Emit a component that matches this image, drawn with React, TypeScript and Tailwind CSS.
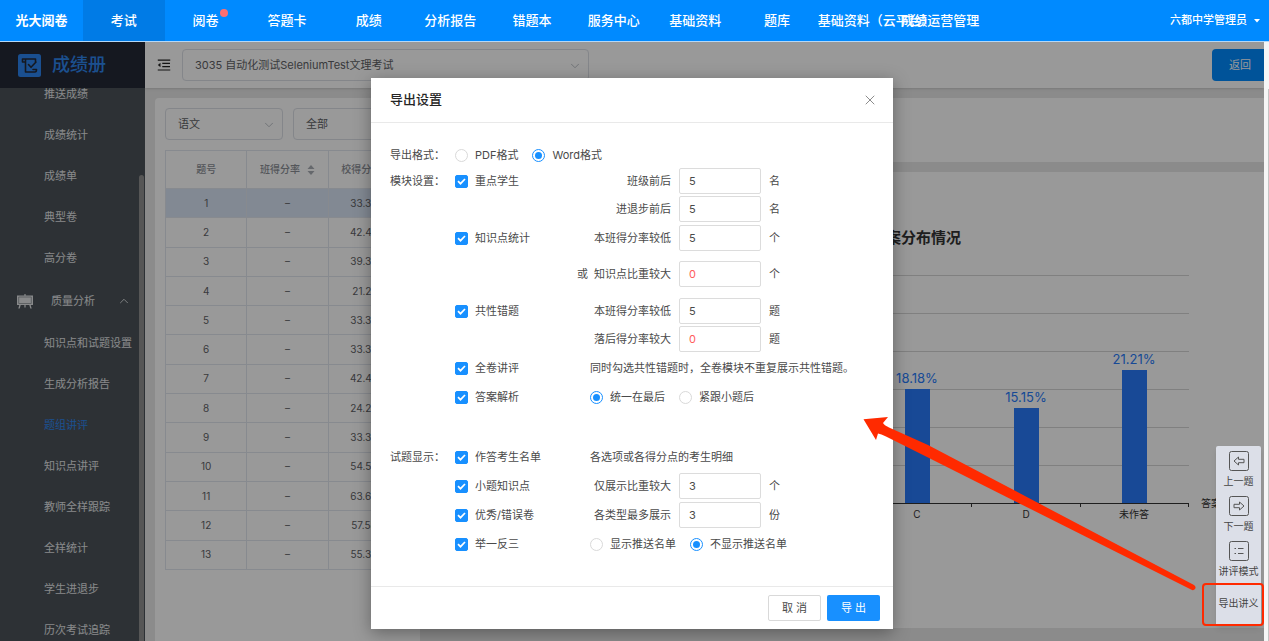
import { useState } from "react";
import type { ReactNode } from "react";
import { ChevronDown, ChevronUp, X } from "lucide-react";
import { AiOutlineMenuFold } from "react-icons/ai";

const navItems = [
  { label: "考试", active: true },
  { label: "阅卷", dot: true },
  { label: "答题卡" },
  { label: "成绩" },
  { label: "分析报告" },
  { label: "错题本" },
  { label: "服务中心" },
  { label: "基础资料" },
  { label: "题库" },
  { label: "基础资料（云平台）" },
  { label: "成绩运营管理" },
];

const scoreMenu = ["推送成绩", "成绩统计", "成绩单", "典型卷", "高分卷"];

const qualityMenu = [
  "知识点和试题设置",
  "生成分析报告",
  "题组讲评",
  "知识点讲评",
  "教师全样跟踪",
  "全样统计",
  "学生进退步",
  "历次考试追踪",
];

const rates = [
  "33.33%",
  "42.42%",
  "39.39%",
  "21.21%",
  "33.33%",
  "33.33%",
  "42.42%",
  "24.24%",
  "33.33%",
  "54.55%",
  "63.64%",
  "57.58%",
  "55.30%",
];

const bars = [
  { label: "A", x: 270, value: 39.39 },
  { label: "B", x: 379, value: 6.06 },
  { label: "C", x: 487, value: 18.18 },
  { label: "D", x: 596, value: 15.15 },
  { label: "未作答", x: 704, value: 21.21 },
];

const Header = () => (
  <header className="flex h-[42px] shrink-0 items-stretch border-b border-[#b5d8f7] bg-[#008aff] text-[13px] font-medium text-white">
    <a href="#" className="flex w-[83px] shrink-0 items-center justify-center font-bold">
      光大阅卷
    </a>
    <nav className="grid w-[898px] shrink-0 grid-cols-11">
      {navItems.map((item) => (
        <a
          key={item.label}
          href="#"
          className={`relative whitespace-nowrap text-center leading-[41px] ${
            item.active ? "bg-[#007be6]" : ""
          }`}
        >
          {item.label}
          {item.dot && (
            <span className="absolute right-[18px] top-[9px] size-2 rounded-full bg-[#ff6f6f]" />
          )}
        </a>
      ))}
    </nav>
    <button className="ml-auto mr-[9px] flex items-center gap-[7px] whitespace-nowrap text-[11px]">
      六都中学管理员
      <svg width="6" height="4" viewBox="0 0 6 4" fill="currentColor">
        <path d="M0 0h6L3 3.5z" />
      </svg>
    </button>
  </header>
);

const Sidebar = () => (
  <aside className="flex w-[145px] shrink-0 flex-col bg-[#4b5359] text-[11px] text-[#e3e5e7]">
    <div className="flex h-[46px] shrink-0 items-center gap-[11px] bg-[#242936] pl-[18px] text-lg font-medium text-[#2e86ee]">
      <svg width="23" height="23" viewBox="0 0 23 23" fill="none">
        <rect width="23" height="23" rx="2.5" fill="#2c84f0" />
        <path
          d="M7.500 8H4.500V5h13v3.500M7.500 5v13h9.500q1.500 0 1.500-2.500h-3.500M10.500 10.500l2.500 2.800 5-5.300"
          stroke="#242936"
          strokeWidth="1.600"
          strokeLinecap="round"
          strokeLinejoin="round"
        />
      </svg>
      成绩册
    </div>
    <div className="flex min-h-0 flex-1">
      <div className="min-w-0 flex-1 overflow-hidden">
        <ul className="-mt-[14px]">
          {scoreMenu.map((label) => (
            <li key={label}>
              <a href="#" className="flex h-[41px] items-center whitespace-nowrap pl-11">
                {label}
              </a>
            </li>
          ))}
        </ul>
        <button className="flex h-11 w-full items-center pl-[17px] pr-2">
          <svg width="16" height="15" viewBox="0 0 16 15" fill="currentColor">
            <path d="M7.400 0h1.200v1.500H16v9.500h-2.300l1 3.500h-1.400l-1-3.500H8.600v2.500H7.400V11H3.700l-1 3.500H1.300l1-3.500H0V1.500h7.400z" />
            <path d="M1.700 3h12.600v6.500H1.700z" fill="none" stroke="#8b9196" strokeWidth=".8" />
          </svg>
          <span className="ml-[18px]">质量分析</span>
          <ChevronUp className="ml-auto size-[14px]" strokeWidth={1.5} />
        </button>
        <ul>
          {qualityMenu.map((label) => (
            <li key={label}>
              <a
                href="#"
                className={`flex h-[41px] items-center whitespace-nowrap pl-11 ${
                  label === "题组讲评" ? "text-[#2e86ee]" : ""
                }`}
              >
                {label}
              </a>
            </li>
          ))}
        </ul>
      </div>
      <div className="mr-px mt-[87px] w-[5px] shrink-0 rounded-t bg-[#8f8f8f]" />
    </div>
  </aside>
);

const SelectBox = ({ label, options, className }: { label: string; options: string[]; className: string }) => (
  <div className={`relative ${className}`}>
    <select
      aria-label={label}
      className="h-8 w-full appearance-none rounded border border-[#dcdfe6] bg-white pl-3 pr-7 text-[11px] text-[#606266]"
    >
      {options.map((option) => (
        <option key={option}>{option}</option>
      ))}
    </select>
    <ChevronDown
      className="pointer-events-none absolute right-[7px] top-[10px] size-[14px] text-[#b4b8bf]"
      strokeWidth={1.5}
    />
  </div>
);

const Sorter = () => (
  <svg width="8" height="10" viewBox="0 0 8 10" fill="#a9adb5">
    <path d="M4 0l3.500 4h-7zM4 10L.5 6h7z" />
  </svg>
);

const ScoreTable = () => (
  <table className="mt-[10px] h-[420px] w-full table-fixed border-collapse text-center text-[10px] text-[#606266]">
    <thead className="text-[#8c9097]">
      <tr className="h-[38px]">
        <th className="border border-[#e2e6ee] font-medium">题号</th>
        <th className="border border-[#e2e6ee] font-medium">
          <span className="flex items-center justify-center gap-[7px] whitespace-nowrap">
            班得分率 <Sorter />
          </span>
        </th>
        <th className="border border-[#e2e6ee] font-medium">
          <span className="flex items-center justify-center gap-[7px] whitespace-nowrap">
            校得分率 <Sorter />
          </span>
        </th>
      </tr>
    </thead>
    <tbody>
      {rates.map((rate, i) => (
        <tr key={i} className={i === 0 ? "bg-[#d9e4f5]" : ""}>
          <td className="border border-[#e2e6ee]">{i + 1}</td>
          <td className="border border-[#e2e6ee]">–</td>
          <td className="border border-[#e2e6ee]">{rate}</td>
        </tr>
      ))}
    </tbody>
  </table>
);

const AnswerChart = () => (
  <svg
    className="h-full w-full"
    viewBox="0 0 834 456"
    preserveAspectRatio="xMaxYMin meet"
    fill="#333"
    fontSize="10"
  >
    <text x="531" y="71" fontSize="15" fontWeight="700" textAnchor="end">
      学生答案分布情况
    </text>
    {[103, 141, 179, 217, 255, 293].map((y) => (
      <path key={y} d={`M216 ${y}.500H759`} stroke="#d5d5d5" />
    ))}
    {bars.map((bar) => {
      const height = Math.round(bar.value * 6.27);
      return (
        <g key={bar.label} textAnchor="middle">
          <rect x={bar.x - 12} y={331 - height} width="25" height={height} fill="#287bfa" />
          <text x={bar.x} y={325 - height} fontSize="13" fill="#287bfa">
            {bar.value}%
          </text>
          <text x={bar.x} y="346">
            {bar.label}
          </text>
        </g>
      );
    })}
    <path d="M216 331.500H759M216.500 331v4M324.500 331v4M433.500 331v4M541.500 331v4M650.500 331v4M758.500 331v4" stroke="#333" />
    <text x="771" y="335">
      答案
    </text>
  </svg>
);

const Check = ({ children }: { children: ReactNode }) => (
  <label className="flex items-center gap-[7px] whitespace-nowrap">
    <span className="grid size-[13px] shrink-0 place-items-center">
      <input
        type="checkbox"
        defaultChecked
        className="peer size-[13px] appearance-none rounded-[2px] border border-[#d9d9d9] [grid-area:1/1] checked:border-[#1890ff] checked:bg-[#1890ff]"
      />
      <svg
        width="9"
        height="7"
        viewBox="0 0 9 7"
        fill="none"
        className="pointer-events-none invisible [grid-area:1/1] peer-checked:visible"
      >
        <path d="M1 3.200l2.500 2.500L8 1" stroke="#fff" strokeWidth="1.700" />
      </svg>
    </span>
    {children}
  </label>
);

const Radio = ({ name, checked, children }: { name: string; checked?: boolean; children: ReactNode }) => (
  <label className="flex items-center gap-[7px] whitespace-nowrap">
    <span className="grid size-[13px] shrink-0 place-items-center">
      <input
        type="radio"
        name={name}
        defaultChecked={checked}
        className="peer size-[13px] appearance-none rounded-full border border-[#d9d9d9] [grid-area:1/1] checked:border-[#1890ff]"
      />
      <span className="pointer-events-none invisible size-[7px] rounded-full bg-[#1890ff] [grid-area:1/1] peer-checked:visible" />
    </span>
    {children}
  </label>
);

const Row = ({ title, check, children }: { title?: string; check?: string; children: ReactNode }) => (
  <div className="flex h-7 items-center whitespace-nowrap">
    <span className="w-[65px] shrink-0">{title}</span>
    <div className="w-[110px] shrink-0">{check && <Check>{check}</Check>}</div>
    {children}
  </div>
);

type NumberFieldProps = { label: string; value: string; unit: string; prefix?: string };

const NumberField = ({ label, value, unit, prefix }: NumberFieldProps) => (
  <label className="flex items-center gap-2">
    <span className="flex w-[106px] justify-end gap-[6px]">
      {prefix && <span>{prefix}</span>}
      <span>{label}</span>
    </span>
    <input
      type="text"
      defaultValue={value}
      className={`h-[26px] w-[82px] rounded-[2px] border border-[#dcdcdc] bg-white px-[9px] ${
        value === "0" ? "text-[#ff5c5c]" : ""
      }`}
    />
    <span>{unit}</span>
  </label>
);

const ExportDialog = ({ onClose }: { onClose: () => void }) => (
  <div
    role="dialog"
    aria-label="导出设置"
    className="w-[522px] bg-white text-[11px] text-[#4a4a4a] shadow-[0_4px_16px_rgba(0,0,0,0.35)]"
  >
    <div className="flex h-[45px] items-center justify-between border-b border-[#e9e9e9] pl-[19px] pr-[15px]">
      <h2 className="text-[13px] font-medium text-[#262626]">导出设置</h2>
      <button aria-label="关闭" onClick={onClose}>
        <X className="size-4 text-[#8c8c8c]" strokeWidth={1.5} />
      </button>
    </div>

    <form className="flex flex-col gap-px pb-7 pl-[19px] pt-5">
      <div className="-mb-px flex h-6 items-center">
        <span className="w-[65px]">导出格式：</span>
        <div className="flex gap-[14px]">
          <Radio name="format">PDF格式</Radio>
          <Radio name="format" checked>
            Word格式
          </Radio>
        </div>
      </div>
      <div>
        <Row title="模块设置：" check="重点学生">
          <NumberField label="班级前后" value="5" unit="名" />
        </Row>
        <Row>
          <NumberField label="进退步前后" value="5" unit="名" />
        </Row>
      </div>
      <div className="flex flex-col gap-2 pb-2">
        <Row check="知识点统计">
          <NumberField label="本班得分率较低" value="5" unit="个" />
        </Row>
        <Row>
          <NumberField prefix="或" label="知识点比重较大" value="0" unit="个" />
        </Row>
      </div>
      <div>
        <Row check="共性错题">
          <NumberField label="本班得分率较低" value="5" unit="题" />
        </Row>
        <Row>
          <NumberField label="落后得分率较大" value="0" unit="题" />
        </Row>
      </div>
      <Row check="全卷讲评">
        <span className="pl-[25px]">同时勾选共性错题时，全卷模块不重复展示共性错题。</span>
      </Row>
      <Row check="答案解析">
        <div className="flex gap-[14px] pl-[25px]">
          <Radio name="analysis" checked>
            统一在最后
          </Radio>
          <Radio name="analysis">紧跟小题后</Radio>
        </div>
      </Row>

      <div className="mt-[31px] flex flex-col gap-px">
        <Row title="试题显示：" check="作答考生名单">
          <span className="pl-[25px]">各选项或各得分点的考生明细</span>
        </Row>
        <Row check="小题知识点">
          <NumberField label="仅展示比重较大" value="3" unit="个" />
        </Row>
        <Row check="优秀/错误卷">
          <NumberField label="各类型最多展示" value="3" unit="份" />
        </Row>
        <Row check="举一反三">
          <div className="flex gap-[14px] pl-[25px]">
            <Radio name="push">显示推送名单</Radio>
            <Radio name="push" checked>
              不显示推送名单
            </Radio>
          </div>
        </Row>
      </div>
    </form>

    <div className="flex justify-end gap-[6px] border-t border-[#e9e9e9] py-2 pr-[13px]">
      <button
        onClick={onClose}
        className="h-[26px] w-[53px] rounded-[2px] border border-[#d9d9d9] bg-white"
      >
        取 消
      </button>
      <button className="h-[26px] w-[53px] rounded-[2px] bg-[#1890ff] text-white">导 出</button>
    </div>
  </div>
);

const ToolIcon = ({ d }: { d: string }) => (
  <svg width="20" height="20" viewBox="0 0 20 20" fill="none" stroke="#555" strokeLinejoin="round">
    <rect x=".5" y=".5" width="19" height="19" rx="2" />
    <path d={d} />
  </svg>
);

const tools = [
  { label: "上一题", d: "M5 10l4.500-4v2.300H15v3.400H9.500V14z" },
  { label: "下一题", d: "M15 10l-4.500-4v2.300H5v3.400h5.500V14z" },
  { label: "讲评模式", d: "M5.500 7.500h1.500M9 7.500h5.500M5.500 12.500h1.500M9 12.500h5.500" },
];

const ToolBar = () => (
  <div className="absolute bottom-4 right-[3px] flex w-[45px] flex-col rounded-t-[2px] bg-[#dcdfe8] text-[10px] leading-3 text-[#444] shadow-md">
    {tools.map((tool) => (
      <button key={tool.label} className="flex h-[45px] flex-col items-center gap-1 whitespace-nowrap pt-[5px]">
        <ToolIcon d={tool.d} />
        {tool.label}
      </button>
    ))}
    <button className="h-11 whitespace-nowrap">导出讲义</button>
  </div>
);

const App = () => {
  const [open, setOpen] = useState(true);

  return (
    <div className="flex h-screen flex-col overflow-hidden bg-white font-[Inter,'Noto_Sans_CJK_SC',sans-serif]">
      <Header />

      <div className="flex min-h-0 flex-1">
        <div className="relative flex min-w-0 flex-1 overflow-hidden">
          <Sidebar />

          <main className="flex min-w-0 flex-1 flex-col bg-[#e8e8e8]">
            <div className="z-10 flex h-[46px] shrink-0 items-center bg-white pl-[11px] shadow-sm">
              <button aria-label="收起菜单">
                <AiOutlineMenuFold className="size-4 text-[#222]" />
              </button>
              <SelectBox
                label="考试"
                options={["3035 自动化测试SeleniumTest文理考试"]}
                className="ml-[10px] w-[407px]"
              />
              <button className="ml-auto h-8 rounded-l bg-[#008aff] pl-[17px] pr-[13px] text-[11px] text-white">
                返回
              </button>
            </div>

            <div className="flex min-h-0 flex-1 gap-[10px] pl-[10px] pt-[10px]">
              <section className="w-[265px] shrink-0 rounded-tl bg-white p-[10px]">
                <div className="flex gap-[10px]">
                  <SelectBox label="科目" options={["语文"]} className="w-[118px]" />
                  <SelectBox label="班级" options={["全部"]} className="w-[117px]" />
                </div>
                <ScoreTable />
              </section>

              <div className="flex min-w-0 flex-1 flex-col gap-[10px] pb-[13px]">
                <section className="h-16 shrink-0 bg-white" />
                <section className="min-h-0 flex-1 bg-white">
                  <AnswerChart />
                </section>
              </div>
            </div>
          </main>

          {open && (
            <div className="absolute inset-0 z-20 flex items-start justify-center bg-black/40 pt-9">
              <ExportDialog onClose={() => setOpen(false)} />
            </div>
          )}

          {/* floating tools with the export entry marked */}
          <div className="absolute bottom-0 right-0 z-30">
            <ToolBar />
            <div className="pointer-events-none absolute bottom-[15px] right-0 h-[43px] w-[62px] rounded border-2 border-[#ff2a00]" />
            <svg
              className="pointer-events-none absolute bottom-[47px] right-16"
              width="340"
              height="182"
              viewBox="0 0 340 182"
              fill="#ff2a00"
            >
              <path d="M3.500 7.300L28 5l-5 6q1 2 6 4.500L68 33 334 173q2.500 2 1 4t-4 .5L66 44.500 26 24.500q-5-2.500-8-3L16 28z" />
            </svg>
          </div>
        </div>

        {/* page scrollbar */}
        <div className="flex w-[5px] shrink-0 justify-end bg-[#f6f6f6]">
          <div className="mt-[47px] w-px bg-[#c4c4c4]" />
        </div>
      </div>
    </div>
  );
};

export default App;
